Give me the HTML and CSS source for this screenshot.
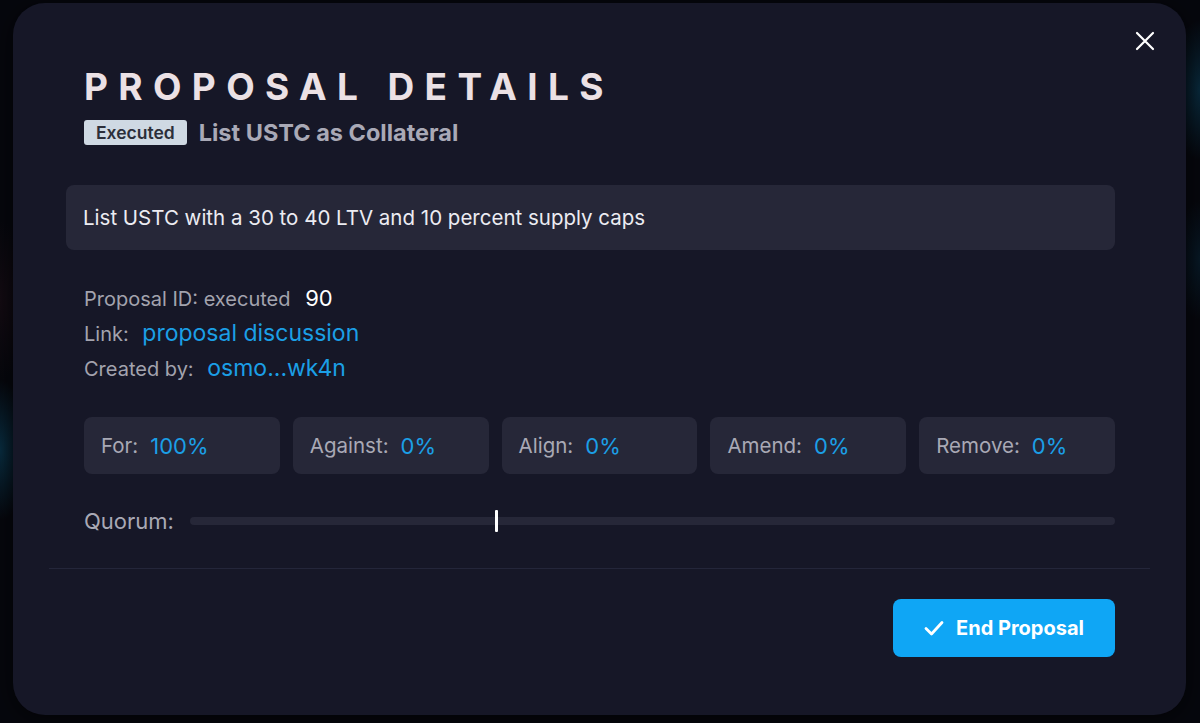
FILE: index.html
```html
<!DOCTYPE html>
<html lang="en">
  <head>
    <meta charset="UTF-8" />
    <meta name="viewport" content="width=device-width, initial-scale=1.0" />
    <title>Proposal Details</title>
    <link rel="stylesheet" href="styles.css">
  </head>
  <body>
    <div class="modal">
      <button class="closeBtn" aria-label="Close">
        <svg width="20" height="20" viewBox="0 0 20 20">
          <path d="M2 2 L18 18 M18 2 L2 18" stroke="#fff" stroke-width="2.2" stroke-linecap="round" />
        </svg>
      </button>

      <div class="head">
        <h1>Proposal Details</h1>
        <div class="subTitle">
          <span class="badge">Executed</span>
          <h2>List USTC as Collateral</h2>
        </div>
      </div>

      <div class="desc">List USTC with a 30 to 40 LTV and 10 percent supply caps</div>

      <div class="info">
        <p>Proposal ID: executed <span class="num">90</span></p>
        <p>Link: <a href="#">proposal discussion</a></p>
        <p>Created by: <a href="#">osmo...wk4n</a></p>
      </div>

      <div class="votes">
        <div class="vote">For: <span>100%</span></div>
        <div class="vote">Against: <span>0%</span></div>
        <div class="vote">Align: <span>0%</span></div>
        <div class="vote">Amend: <span>0%</span></div>
        <div class="vote">Remove: <span>0%</span></div>
      </div>

      <div class="quorum">
        <span class="qLabel">Quorum:</span>
        <div class="track">
          <div class="marker" style="left: 33%"></div>
        </div>
      </div>

      <div class="footer">
        <button class="endBtn">
          <svg width="20" height="16" viewBox="0 0 20 16">
            <path d="M2 8.5 L7.5 14 L18 2.5" fill="none" stroke="#fff" stroke-width="2.8" stroke-linecap="round" stroke-linejoin="round" />
          </svg>
          End Proposal
        </button>
      </div>
    </div>
  </body>
</html>
```

FILE: styles.css
```css
* {
  margin: 0;
  padding: 0;
  box-sizing: border-box;
  font-family: Inter, "Liberation Sans", sans-serif;
}
body {
  overflow: hidden;
  height: 723px;
  background-color: #06070d;
  background-image:
    radial-gradient(ellipse 30px 70px at 0 450px, rgba(10, 75, 105, 0.55), transparent),
    radial-gradient(ellipse 30px 80px at 0 300px, rgba(50, 20, 30, 0.3), transparent),
    radial-gradient(ellipse 30px 70px at 1200px 90px, rgba(10, 75, 105, 0.5), transparent),
    radial-gradient(ellipse 25px 60px at 1200px 260px, rgba(10, 65, 95, 0.3), transparent);
}
.modal {
  position: relative;
  margin: 3px 14px 0 13px;
  height: 712px;
  background-color: #161727;
  border-radius: 32px;
  padding: 62px 71px 0 53px;
  display: flex;
  flex-direction: column;
  box-shadow: 0 4px 24px rgba(0, 0, 0, 0.6);
}
.closeBtn {
  position: absolute;
  top: 28px;
  right: 31px;
  background: none;
  border: none;
  cursor: pointer;
  display: flex;
}
.head {
  padding-left: 18px;
}
h1 {
  font-size: 37px;
  font-weight: 700;
  line-height: 44px;
  text-transform: uppercase;
  letter-spacing: 0.28em;
  color: #ebe1e5;
}
.subTitle {
  display: flex;
  align-items: center;
  gap: 12px;
  margin-top: 9px;
}
.badge {
  background-color: #cfd9e3;
  color: #2c2f3a;
  font-size: 17.5px;
  font-weight: 600;
  padding: 0 12px;
  height: 25px;
  line-height: 25px;
  border-radius: 3px;
}
h2 {
  font-size: 23.5px;
  font-weight: 700;
  color: #a9a9b6;
}
.desc {
  margin-top: 38px;
  background-color: #262738;
  border-radius: 8px;
  height: 65px;
  display: flex;
  align-items: center;
  padding: 0 17px;
  font-size: 20.5px;
  color: #ececf2;
}
.info {
  margin-top: 34px;
  padding-left: 18px;
  display: flex;
  flex-direction: column;
  gap: 6px;
}
.info p {
  font-size: 20px;
  line-height: 28px;
  color: #a3a3ae;
}
.info .num {
  font-size: 22px;
  color: #fff;
  margin-left: 9px;
}
.info a {
  font-size: 23px;
  color: #1b9fe6;
  text-decoration: none;
  margin-left: 8px;
}
.votes {
  margin-top: 34px;
  margin-left: 18px;
  display: grid;
  grid-template-columns: repeat(5, 1fr);
  gap: 13px;
}
.vote {
  background-color: #262738;
  border-radius: 8px;
  height: 57px;
  display: flex;
  align-items: center;
  padding: 0 17px;
  font-size: 20.5px;
  color: #a9a9b5;
}
.vote span {
  font-size: 22px;
  color: #1b9fe6;
  margin-left: 12px;
}
.quorum {
  margin-top: 34px;
  margin-left: 18px;
  display: flex;
  align-items: center;
  gap: 16px;
}
.qLabel {
  font-size: 22px;
  color: #a9a9b5;
}
.track {
  flex: 1;
  height: 8px;
  border-radius: 4px;
  background-color: #262738;
  position: relative;
}
.marker {
  position: absolute;
  top: -7px;
  width: 3px;
  height: 22px;
  background-color: #fff;
  border-radius: 1px;
}
.footer {
  margin: 34px -35px 0 -17px;
  border-top: 1px solid #24263a;
  padding: 30px 35px 0 0;
  display: flex;
  justify-content: flex-end;
}
.endBtn {
  background-color: #0fa6f5;
  color: #fff;
  border: none;
  border-radius: 8px;
  width: 222px;
  height: 58px;
  display: flex;
  align-items: center;
  justify-content: center;
  gap: 12px;
  font-size: 20px;
  font-weight: 700;
  cursor: pointer;
}
```
